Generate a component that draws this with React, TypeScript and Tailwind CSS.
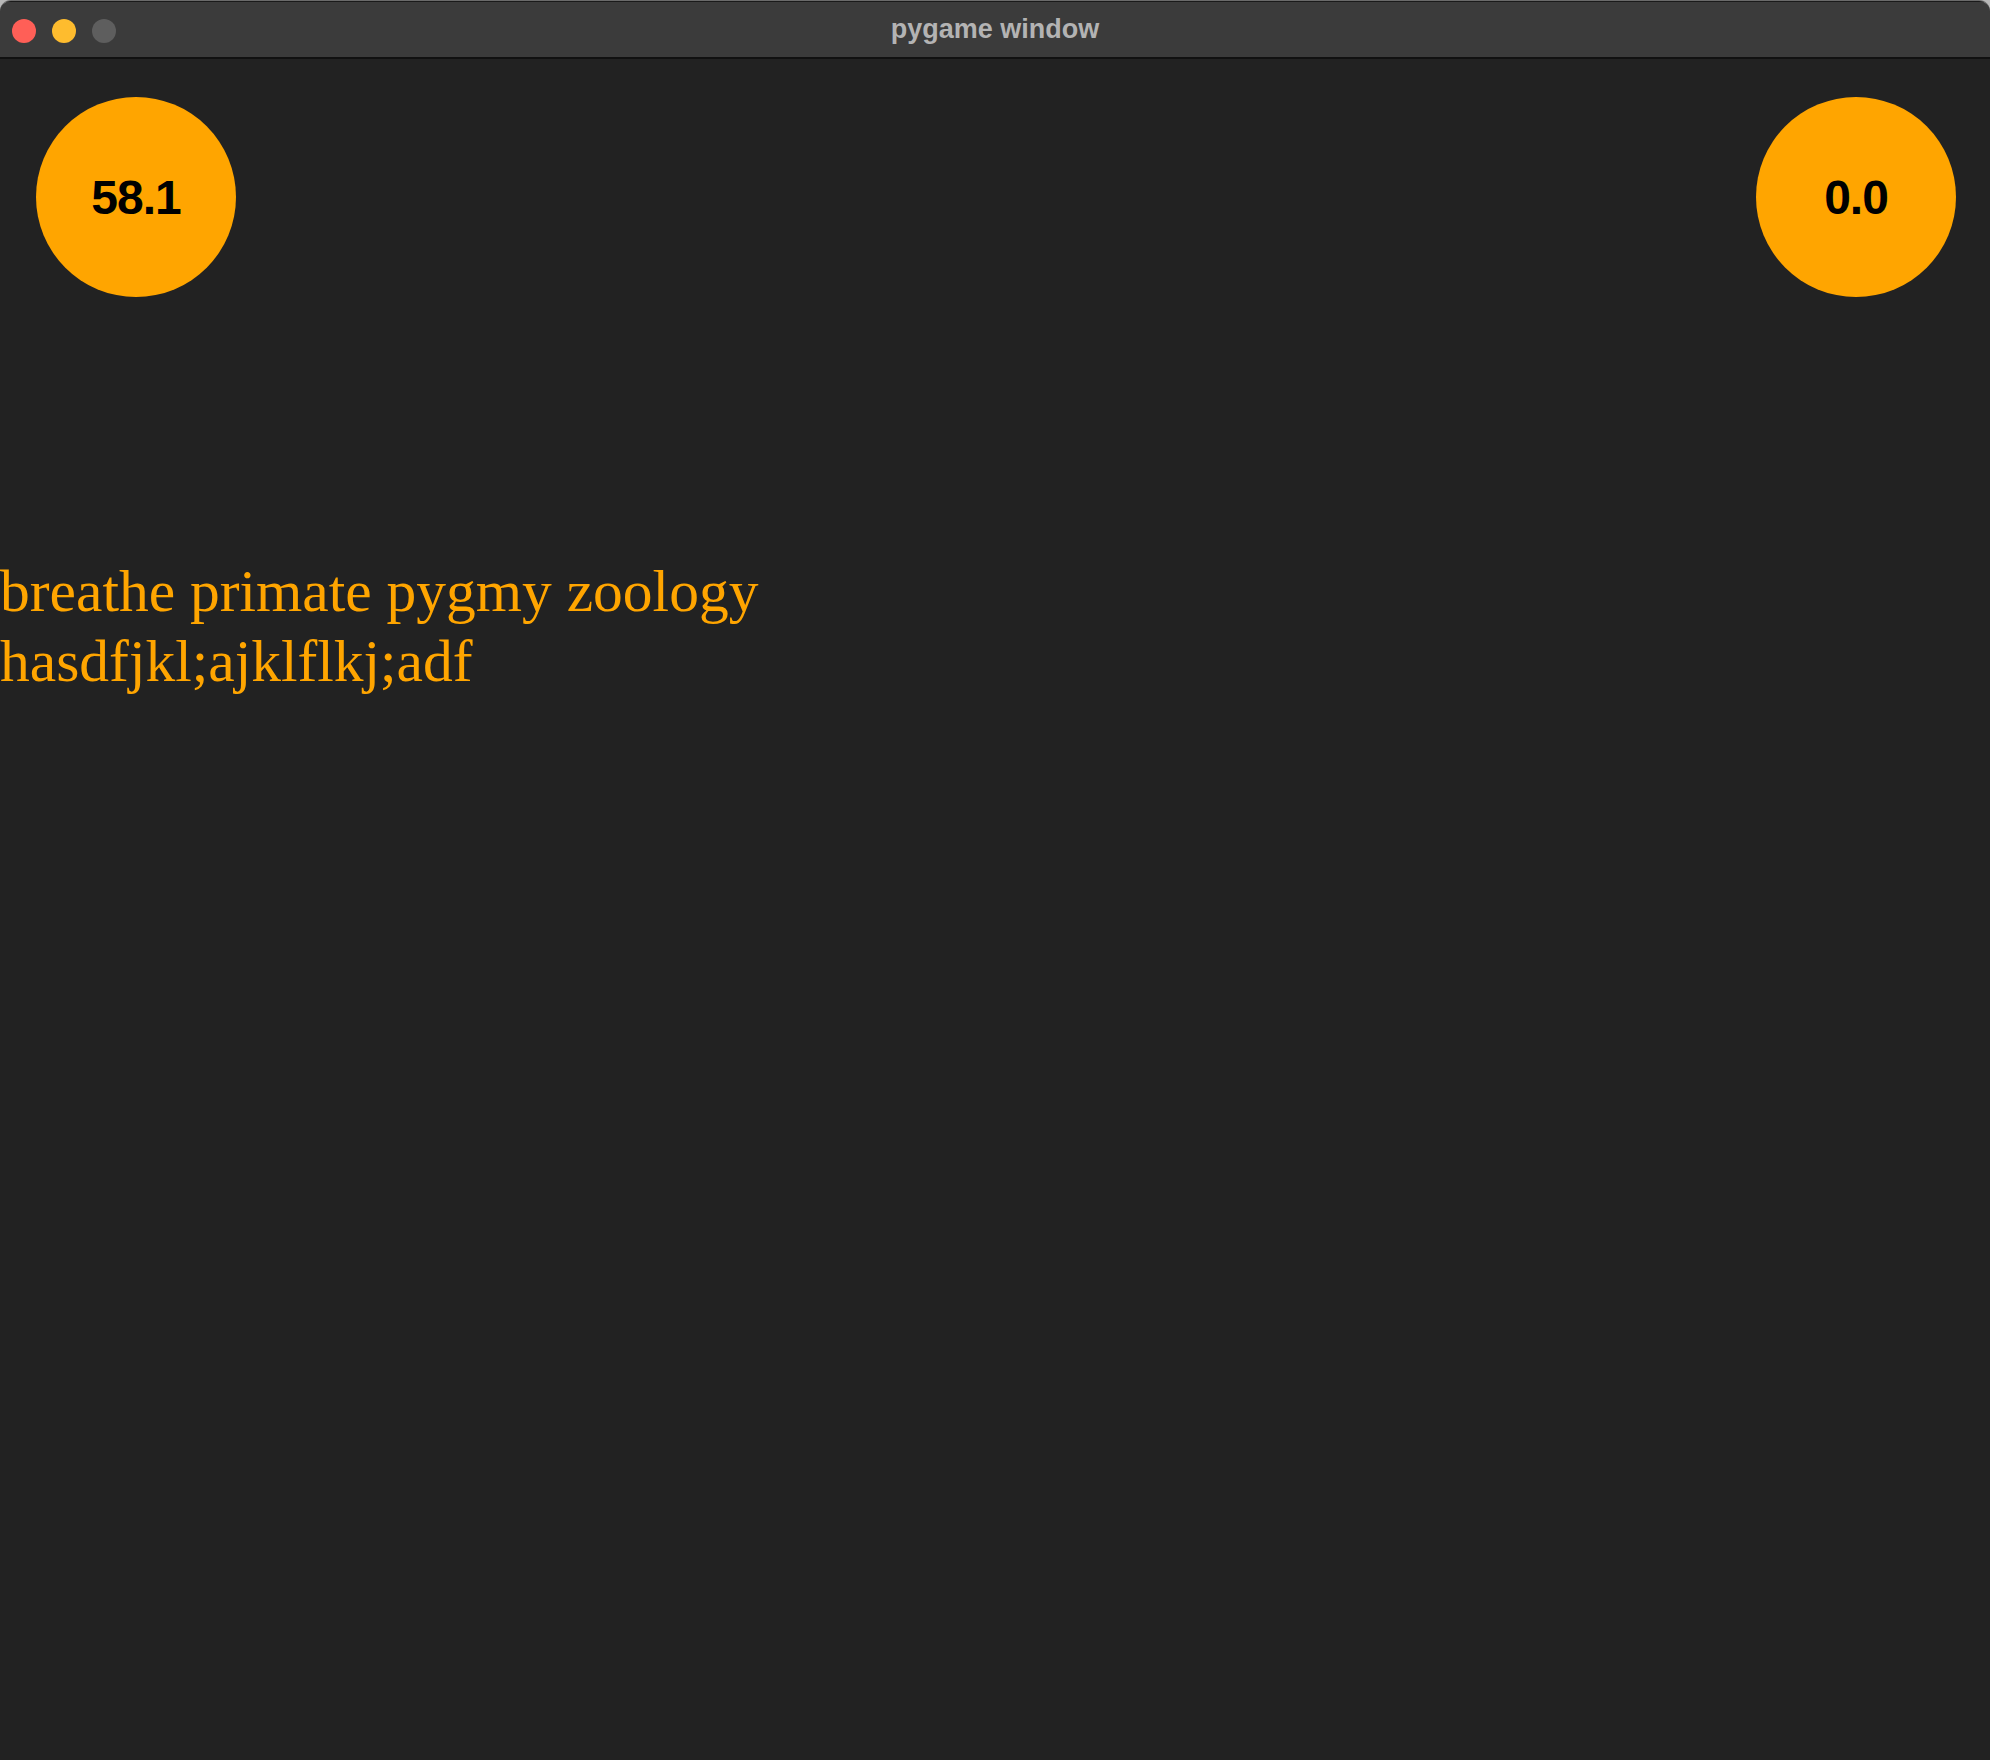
import React from 'react';

const Gauge: React.FC<{ value: string }> = ({ value }) => (
  <div className="w-[200px] h-[200px] rounded-full bg-[#ffa500] flex items-center justify-center">
    <span className="text-[48px] font-bold text-black leading-none tracking-[-1px] pt-[1px]" style={{ fontFamily: '"Liberation Sans", Arial, sans-serif' }}>
      {value}
    </span>
  </div>
);

const App: React.FC = () => {
  return (
    <div className="w-[1990px] h-[1760px] bg-[#b8b8b8] overflow-hidden">
      <div className="w-full h-full flex flex-col rounded-t-[11px] overflow-hidden border-t border-[#6a6a6a]">
        {/* title bar */}
        <div className="h-[58px] shrink-0 bg-[#3b3b3b] border-t border-[#1a1a1a] border-b-2 border-b-[#111] relative flex items-center justify-center">
          <div className="absolute left-[12px] top-[17px] flex gap-[16px]">
            <div className="w-[24px] h-[24px] rounded-full bg-[#ff5f57]" />
            <div className="w-[24px] h-[24px] rounded-full bg-[#febc2e]" />
            <div className="w-[24px] h-[24px] rounded-full bg-[#5e5e5e]" />
          </div>
          <span className="text-[27px] font-bold text-[#b3b3b3] pb-[1px]" style={{ fontFamily: '"Liberation Sans", Arial, sans-serif' }}>
            pygame window
          </span>
        </div>

        {/* game surface */}
        <div className="flex-1 bg-[#222222] flex flex-col">
          <div className="flex justify-between pl-[36px] pr-[34px] pt-[38px]">
            <Gauge value="58.1" />
            <Gauge value="0.0" />
          </div>
          <div
            className="mt-[259px] text-[59.5px] leading-[70px] text-[#ffa500]"
            style={{ fontFamily: '"Liberation Serif", "Times New Roman", serif' }}
          >
            <div>breathe primate pygmy zoology</div>
            <div>hasdfjkl;ajklflkj;adf</div>
          </div>
        </div>
      </div>
    </div>
  );
};

export default App;
